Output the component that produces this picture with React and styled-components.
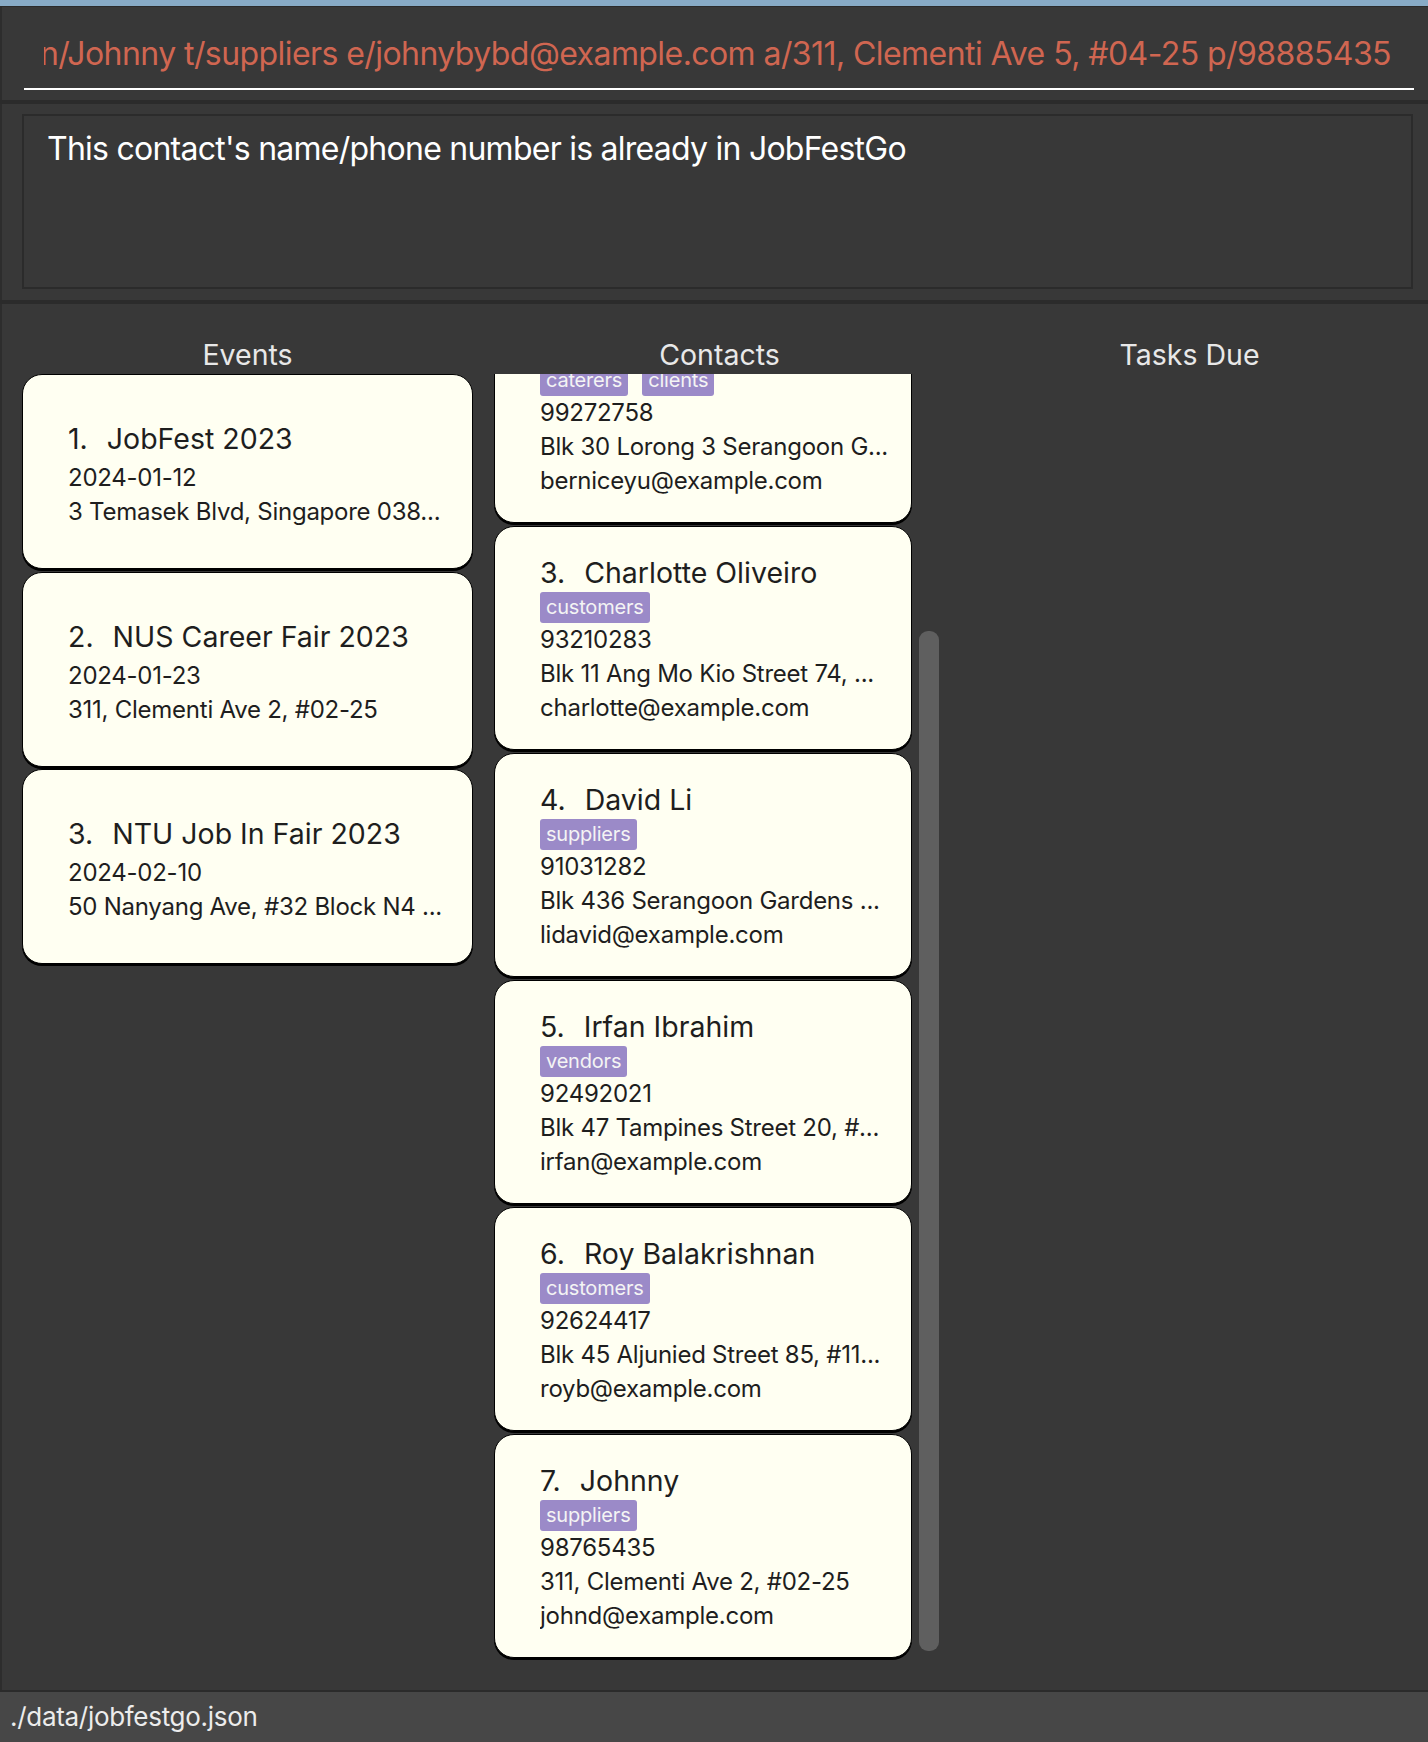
import React from "react";
import styled, { createGlobalStyle } from "styled-components";

const GlobalStyle = createGlobalStyle`
  html, body { margin: 0; padding: 0; background: #383838; }
  body { font-family: Inter, "Noto Sans", "Liberation Sans", sans-serif; -webkit-font-smoothing: antialiased; }
  * { box-sizing: border-box; }
`;

const Window = styled.div`
  display: flex;
  flex-direction: column;
  width: 1428px;
  height: 1742px;
  overflow: hidden;
  background: #2b2b2b;
`;

const TitleStrip = styled.div`
  flex: none;
  height: 6px;
  background: #88abc6;
`;

const CommandPanel = styled.section`
  flex: none;
  height: 94px;
  background: #383838;
  border-top: 1px solid #2b2b2b;
  border-left: 2px solid #2d2d2d;
  padding: 0 14px 10px 22px;
`;

const CommandField = styled.div`
  display: flex;
  justify-content: flex-end;
  overflow: hidden;
  white-space: nowrap;
  margin: 0;
  padding: 27px 23px 0 20px;
  height: 83px;
  border-bottom: 2px solid #ffffff;
`;

const CommandClip = styled.div`
  display: flex;
  justify-content: flex-end;
  overflow: hidden;
  width: 100%;
`;

const CommandText = styled.span`
  flex: none;
  font-size: 32px;
  line-height: 40px;
  letter-spacing: -0.57px;
  color: #d06651;
`;

const ResultPanel = styled.section`
  flex: none;
  height: 196px;
  margin-top: 4px;
  background: #383838;
  border-left: 2px solid #2d2d2d;
  padding: 10px 15px 11px 20px;
`;

const ResultBox = styled.div`
  height: 175px;
  border: 2px solid #2b2b2b;
  padding: 13px 23px;
  font-size: 32px;
  line-height: 40px;
  letter-spacing: -0.75px;
  color: #ffffff;
`;

const MainPanel = styled.main`
  flex: 1;
  min-height: 0;
  margin-top: 4px;
  background: #383838;
  border-left: 2px solid #2d2d2d;
  padding: 33px 15px 30px 20px;
  display: grid;
  grid-template-columns: 451px 451px 1fr;
  column-gap: 21px;
`;

const Column = styled.div`
  display: flex;
  flex-direction: column;
  min-height: 0;
`;

const ColumnTitle = styled.div`
  flex: none;
  text-align: center;
  font-size: 28.5px;
  line-height: 36px;
  margin-bottom: 1px;
  color: #e8e8e8;
`;

const EventList = styled.div`
  display: flex;
  flex-direction: column;
  gap: 2.5px;
`;

const Card = styled.div`
  flex: none;
  background: #fffff2;
  border: 1.5px solid #000;
  border-radius: 20px;
  box-shadow: 0 2px 0 #000;
  color: #1e1e1e;
  padding: ${(p) => (p.$kind === "event" ? "42px 20px 39px 45px" : "28px 20px 24px 45px")};
`;

const CardTitle = styled.div`
  display: flex;
  font-size: 28.5px;
  line-height: ${(p) => (p.$kind === "event" ? 44 : 36)}px;
  white-space: nowrap;
`;

const Index = styled.span`
  margin-right: 19px;
`;

const Line = styled.div`
  font-size: 24px;
  line-height: 34px;
  letter-spacing: -0.25px;
  white-space: nowrap;
  overflow: hidden;
`;

const Tags = styled.div`
  display: flex;
  gap: 14px;
  margin-top: 1px;
  height: 31px;
`;

const Tag = styled.span`
  display: inline-block;
  background: #9b8ac8;
  color: #f4f4f4;
  border-radius: 3px;
  padding: 0 6px;
  font-size: 20px;
  letter-spacing: -0.2px;
  line-height: 31px;
`;

const ContactArea = styled.div`
  flex: 1;
  min-height: 0;
  display: flex;
`;

const ContactViewport = styled.div`
  flex: 1;
  min-width: 0;
  overflow: hidden;
  display: flex;
  flex-direction: column;
  justify-content: flex-end;
`;

const ContactList = styled.div`
  flex: none;
  display: flex;
  flex-direction: column;
  gap: 3px;
  padding-bottom: 2px;
`;

const ScrollTrack = styled.div`
  flex: none;
  width: 20px;
  margin: 0 6px 0 7px;
  display: flex;
  flex-direction: column;
  justify-content: flex-end;
  padding-bottom: 9px;
`;

const ScrollThumb = styled.div`
  height: ${(p) => p.$size}px;
  border-radius: 9px;
  background: #5f5f5f;
`;

const StatusBar = styled.footer`
  flex: none;
  height: 50px;
  margin-top: 2px;
  background: #474747;
  padding-left: 10px;
  font-size: 26px;
  letter-spacing: -0.3px;
  line-height: 50px;
  color: #ececec;
`;

const events = [
  { name: "JobFest 2023", date: "2024-01-12", address: "3 Temasek Blvd, Singapore 038..." },
  { name: "NUS Career Fair 2023", date: "2024-01-23", address: "311, Clementi Ave 2, #02-25" },
  { name: "NTU Job In Fair 2023", date: "2024-02-10", address: "50 Nanyang Ave, #32 Block N4 ..." },
];

const contacts = [
  { name: "Alex Yeoh", tags: ["vendors"], phone: "87438807", address: "Blk 30 Geylang Street 29, #0...", email: "alexyeoh@example.com" },
  { name: "Bernice Yu", tags: ["caterers", "clients"], phone: "99272758", address: "Blk 30 Lorong 3 Serangoon G...", email: "berniceyu@example.com" },
  { name: "Charlotte Oliveiro", tags: ["customers"], phone: "93210283", address: "Blk 11 Ang Mo Kio Street 74, ...", email: "charlotte@example.com" },
  { name: "David Li", tags: ["suppliers"], phone: "91031282", address: "Blk 436 Serangoon Gardens ...", email: "lidavid@example.com" },
  { name: "Irfan Ibrahim", tags: ["vendors"], phone: "92492021", address: "Blk 47 Tampines Street 20, #...", email: "irfan@example.com" },
  { name: "Roy Balakrishnan", tags: ["customers"], phone: "92624417", address: "Blk 45 Aljunied Street 85, #11...", email: "royb@example.com" },
  { name: "Johnny", tags: ["suppliers"], phone: "98765435", address: "311, Clementi Ave 2, #02-25", email: "johnd@example.com" },
];

export default function App() {
  return (
    <>
      <GlobalStyle />
      <Window>
        <TitleStrip />
        <CommandPanel>
          <CommandField>
            <CommandClip>
              <CommandText>
                add n/Johnny t/suppliers e/johnybybd@example.com a/311, Clementi Ave 5, #04-25 p/98885435
              </CommandText>
            </CommandClip>
          </CommandField>
        </CommandPanel>
        <ResultPanel>
          <ResultBox>This contact's name/phone number is already in JobFestGo</ResultBox>
        </ResultPanel>
        <MainPanel>
          <Column>
            <ColumnTitle>Events</ColumnTitle>
            <EventList>
              {events.map((e, i) => (
                <Card key={e.name} $kind="event">
                  <CardTitle $kind="event">
                    <Index>{i + 1}.</Index>
                    {e.name}
                  </CardTitle>
                  <Line>{e.date}</Line>
                  <Line>{e.address}</Line>
                </Card>
              ))}
            </EventList>
          </Column>
          <Column>
            <ColumnTitle>Contacts</ColumnTitle>
            <ContactArea>
              <ContactViewport>
                <ContactList>
                  {contacts.map((c, i) => (
                    <Card key={c.name} $kind="contact">
                      <CardTitle $kind="contact">
                        <Index>{i + 1}.</Index>
                        {c.name}
                      </CardTitle>
                      <Tags>
                        {c.tags.map((t) => (
                          <Tag key={t}>{t}</Tag>
                        ))}
                      </Tags>
                      <Line>{c.phone}</Line>
                      <Line>{c.address}</Line>
                      <Line>{c.email}</Line>
                    </Card>
                  ))}
                </ContactList>
              </ContactViewport>
              <ScrollTrack>
                <ScrollThumb $size={1020} />
              </ScrollTrack>
            </ContactArea>
          </Column>
          <Column>
            <ColumnTitle>Tasks Due</ColumnTitle>
          </Column>
        </MainPanel>
        <StatusBar>./data/jobfestgo.json</StatusBar>
      </Window>
    </>
  );
}
